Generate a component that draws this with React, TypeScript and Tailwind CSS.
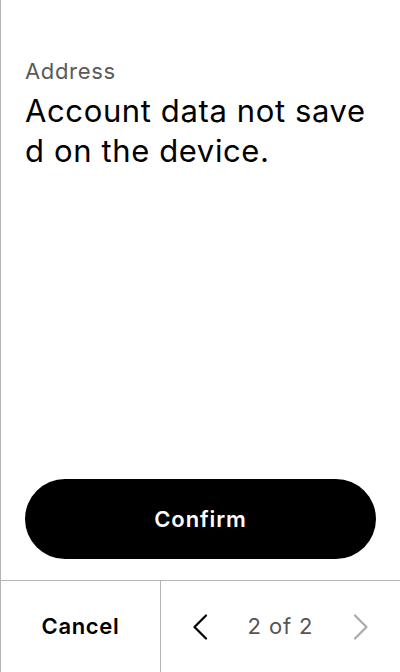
function Chevron({ dir, className }: { dir: "left" | "right"; className?: string }) {
  return (
    <svg
      width="16"
      height="26"
      viewBox="0 0 16 26"
      fill="none"
      stroke="currentColor"
      strokeWidth={2.2}
      strokeLinecap="round"
      strokeLinejoin="round"
      className={className}
    >
      {dir === "left" ? <path d="M14 1.5 L2.5 13 L14 24.5" /> : <path d="M2 1.5 L13.5 13 L2 24.5" />}
    </svg>
  );
}

export default function App() {
  return (
    <div
      className="flex h-[672px] w-[400px] flex-col border-l border-[#b4b4b4] bg-white text-black"
      style={{ fontFamily: "Inter, 'Noto Sans', sans-serif" }}
    >
      {/* Content */}
      <div className="flex-1 px-6 pt-[57px]">
        <div className="text-[22px] leading-[28px] tracking-[0.03em] text-[#5a5a5a]">Address</div>
        <p className="mt-[6px] mr-[6px] break-all text-[31px] leading-[40px] tracking-[0.02em]">
          Account data not saved on the device.
        </p>
      </div>

      {/* Confirm */}
      <div className="px-6 pb-[21px]">
        <button className="flex h-[80px] w-full items-center justify-center rounded-full bg-black text-[22px] font-semibold tracking-[0.04em] text-white">
          Confirm
        </button>
      </div>

      {/* Footer */}
      <div className="flex h-[92px] border-t border-[#b4b4b4]">
        <button className="flex w-[160px] items-center justify-center border-r border-[#b4b4b4] text-[22px] font-semibold tracking-[0.03em]">
          Cancel
        </button>
        <div className="flex flex-1 items-center justify-between pl-[31px] pr-[31px]">
          <Chevron dir="left" className="text-black" />
          <span className="text-[22px] tracking-[0.04em] text-[#555]">2 of 2</span>
          <Chevron dir="right" className="text-[#aaa]" />
        </div>
      </div>
    </div>
  );
}
